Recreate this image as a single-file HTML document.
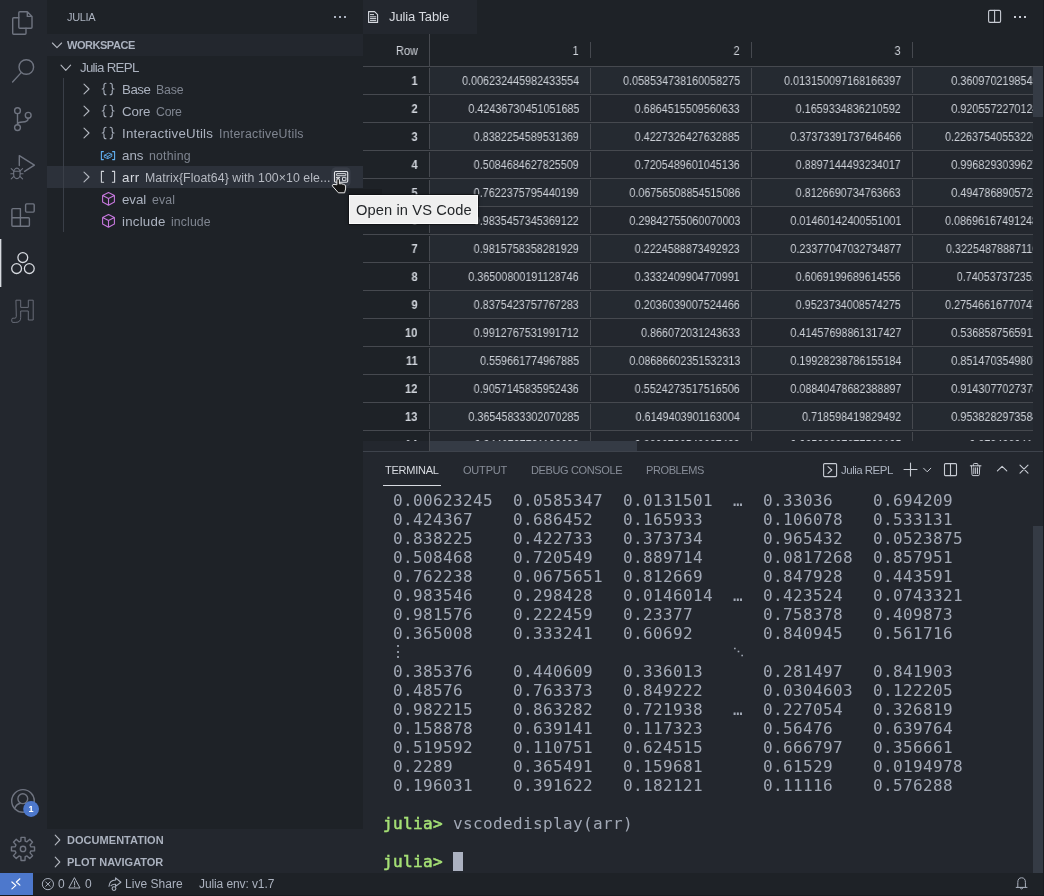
<!DOCTYPE html>
<html><head><meta charset="utf-8"><title>Julia Table</title>
<style>
*{box-sizing:border-box;margin:0;padding:0}
html,body{width:1044px;height:896px;overflow:hidden;background:#23272e}
body{font-family:"Liberation Sans",sans-serif;font-size:13px;color:#abb2bf;position:relative}
.abs{position:absolute}
#act{left:0;top:0;width:47px;height:873px;background:#23272e}
#side{left:47px;top:0;width:316px;height:873px;background:#1e2227}
#ed{left:363px;top:0;width:681px;height:452px;background:#1e2227;overflow:hidden}
#panel{left:363px;top:452px;width:681px;height:421px;background:#23272e;overflow:hidden}
#status{left:0;top:873px;width:1044px;height:23px;background:#1e2227}
svg{display:block;position:absolute;overflow:visible}
.t{position:absolute;white-space:pre;will-change:transform}
.hdr{left:47px;width:316px;height:22px;background:#23272e}
/* table */
#grid{left:0;width:670px;overflow:hidden;background:#23272e}
#ghead{left:0;top:0;width:681px;height:32px;background:#1e2227}
.r{position:absolute;left:0;width:670px;height:28px;border-bottom:1px solid #46494f}
.r.o{background:#252a31}.r.e{background:#23272e}
.c{position:absolute;top:0;height:27px;line-height:29px;font-size:12px;color:#cdd1d8;text-align:right;white-space:pre;overflow:visible}
.c span{display:inline-block;transform:scaleX(.9);transform-origin:100% 50%;will-change:transform}
.c:after{content:"";position:absolute;right:0;top:1px;bottom:1px;width:1px;background:#46494f}
.rn{left:0;width:67px;background:#1e2227;padding-right:12.7px;font-weight:700;color:#d0d4db}
.rn span{transform:scaleX(.93)}
.c1{left:67px;width:161px;padding-right:12px}
.c2{left:228px;width:161px;padding-right:12px}
.c3{left:389px;width:161px;padding-right:12px}
.c4{left:550px;width:161px;padding-right:12px}
.hc{position:absolute;top:0;height:32px;line-height:34px;font-size:12px;color:#d0d4db;text-align:right;padding-right:12px}
.hc span{display:inline-block;transform:scaleX(.92);transform-origin:100% 50%;will-change:transform}
.hs{position:absolute;top:8px;width:1px;height:16px;background:#46494f}
/* terminal */
#term{left:19.6px;top:39px;font-family:"DejaVu Sans Mono","Liberation Mono",monospace;font-size:16px;line-height:19px;letter-spacing:.368px;color:#a1a8b5;white-space:pre;will-change:transform}
#term b{color:#a5e075;font-weight:400;-webkit-text-stroke:.5px #a5e075}
.vd{position:relative;left:-3.2px;top:-1px;line-height:0}.dd{position:relative;left:-6px;top:-2.5px;font-size:11px;letter-spacing:0;line-height:0;font-weight:700}
</style></head><body>
<div id="act" class="abs"></div>
<div id="side" class="abs"></div>
<div class="abs hdr" style="top:34px"></div>
<div class="abs" style="left:47px;top:166px;width:316px;height:22px;background:#2c313a"></div>
<div class="abs" style="left:63px;top:78px;width:1px;height:154px;background:#3a3f48"></div>
<div class="abs hdr" style="top:829px;height:44px"></div>

<div id="ed" class="abs">
  <div class="abs" style="left:0;top:0;width:114px;height:34px;background:#23272e"></div>
  <div id="ghead" class="abs" style="top:34px">
    <div class="hc" style="left:0;width:67px"><span>Row</span></div>
    <div class="hc" style="left:67px;width:161px"><span>1</span></div>
    <div class="hc" style="left:228px;width:161px"><span>2</span></div>
    <div class="hc" style="left:389px;width:161px"><span>3</span></div>
    <div class="abs" style="left:66px;top:0;width:1px;height:32px;background:#46494f"></div>
    <div class="hs" style="left:227px"></div><div class="hs" style="left:388px"></div><div class="hs" style="left:549px"></div>
    <div class="abs" style="left:0;top:32px;width:681px;height:1px;background:#46494f"></div>
  </div>
  <div id="grid" class="abs" style="top:67px;height:374px">
<div class="r o" style="top:0px"><div class="c rn"><span>1</span></div><div class="c c1"><span>0.006232445982433554</span></div><div class="c c2"><span>0.058534738160058275</span></div><div class="c c3"><span>0.013150097168166397</span></div><div class="c c4"><span>0.36097021985455213</span></div></div>
<div class="r e" style="top:28px"><div class="c rn"><span>2</span></div><div class="c c1"><span>0.42436730451051685</span></div><div class="c c2"><span>0.6864515509560633</span></div><div class="c c3"><span>0.1659334836210592</span></div><div class="c c4"><span>0.92055722701245731</span></div></div>
<div class="r o" style="top:56px"><div class="c rn"><span>3</span></div><div class="c c1"><span>0.8382254589531369</span></div><div class="c c2"><span>0.4227326427632885</span></div><div class="c c3"><span>0.37373391737646466</span></div><div class="c c4"><span>0.226375405532264185</span></div></div>
<div class="r e" style="top:84px"><div class="c rn"><span>4</span></div><div class="c c1"><span>0.5084684627825509</span></div><div class="c c2"><span>0.7205489601045136</span></div><div class="c c3"><span>0.8897144493234017</span></div><div class="c c4"><span>0.99682930396275142</span></div></div>
<div class="r o" style="top:112px"><div class="c rn"><span>5</span></div><div class="c c1"><span>0.7622375795440199</span></div><div class="c c2"><span>0.06756508854515086</span></div><div class="c c3"><span>0.8126690734763663</span></div><div class="c c4"><span>0.49478689057241536</span></div></div>
<div class="r e" style="top:140px"><div class="c rn"><span>6</span></div><div class="c c1"><span>0.9835457345369122</span></div><div class="c c2"><span>0.29842755060070003</span></div><div class="c c3"><span>0.01460142400551001</span></div><div class="c c4"><span>0.086961674912481537</span></div></div>
<div class="r o" style="top:168px"><div class="c rn"><span>7</span></div><div class="c c1"><span>0.9815758358281929</span></div><div class="c c2"><span>0.2224588873492923</span></div><div class="c c3"><span>0.23377047032734877</span></div><div class="c c4"><span>0.322548788871160541</span></div></div>
<div class="r e" style="top:196px"><div class="c rn"><span>8</span></div><div class="c c1"><span>0.36500800191128746</span></div><div class="c c2"><span>0.3332409904770991</span></div><div class="c c3"><span>0.6069199689614556</span></div><div class="c c4"><span>0.7405373723518243</span></div></div>
<div class="r o" style="top:224px"><div class="c rn"><span>9</span></div><div class="c c1"><span>0.8375423757767283</span></div><div class="c c2"><span>0.2036039007524466</span></div><div class="c c3"><span>0.9523734008574275</span></div><div class="c c4"><span>0.275466167707477152</span></div></div>
<div class="r e" style="top:252px"><div class="c rn"><span>10</span></div><div class="c c1"><span>0.9912767531991712</span></div><div class="c c2"><span>0.866072031243633</span></div><div class="c c3"><span>0.41457698861317427</span></div><div class="c c4"><span>0.53685875659128431</span></div></div>
<div class="r o" style="top:280px"><div class="c rn"><span>11</span></div><div class="c c1"><span>0.559661774967885</span></div><div class="c c2"><span>0.08686602351532313</span></div><div class="c c3"><span>0.19928238786155184</span></div><div class="c c4"><span>0.85147035498072664</span></div></div>
<div class="r e" style="top:308px"><div class="c rn"><span>12</span></div><div class="c c1"><span>0.9057145835952436</span></div><div class="c c2"><span>0.5524273517516506</span></div><div class="c c3"><span>0.08840478682388897</span></div><div class="c c4"><span>0.91430770273782154</span></div></div>
<div class="r o" style="top:336px"><div class="c rn"><span>13</span></div><div class="c c1"><span>0.36545833302070285</span></div><div class="c c2"><span>0.6149403901163004</span></div><div class="c c3"><span>0.718598419829492</span></div><div class="c c4"><span>0.95382829735841627</span></div></div>
<div class="r e" style="top:364px"><div class="c rn"><span>14</span></div><div class="c c1"><span>0.3446737731106608</span></div><div class="c c2"><span>0.8806796540687499</span></div><div class="c c3"><span>0.06503397877569105</span></div><div class="c c4"><span>0.87940804195167</span></div></div>
  </div>
  <!-- v scrollbar -->
  <div class="abs" style="left:670px;top:67px;width:10px;height:374px;background:#23272e"></div>
  <div class="abs" style="left:670px;top:67px;width:10px;height:50px;background:#353b45"></div>
  <!-- h scrollbar -->
  <div class="abs" style="left:0;top:441px;width:681px;height:10px;background:#23272e"></div>
  <div class="abs" style="left:67px;top:441px;width:207px;height:10px;background:#353b45"></div>
  <div class="abs" style="left:66px;top:441px;width:1px;height:10px;background:#46494f"></div>
  <div class="abs" style="left:0;top:451px;width:681px;height:1px;background:#3e434c"></div>
</div>

<div id="panel" class="abs">
  <div class="abs" style="left:20px;top:33px;width:58px;height:1px;background:#d7dae0"></div>
  <div id="term" class="abs"> 0.00623245  0.0585347  0.0131501  …  0.33036    0.694209
 0.424367    0.686452   0.165933      0.106078   0.533131
 0.838225    0.422733   0.373734      0.965432   0.0523875
 0.508468    0.720549   0.889714      0.0817268  0.857951
 0.762238    0.0675651  0.812669      0.847928   0.443591
 0.983546    0.298428   0.0146014  …  0.423524   0.0743321
 0.981576    0.222459   0.23377       0.758378   0.409873
 0.365008    0.333241   0.60692       0.840945   0.561716
 <span class="vd">⋮</span>                                 <span class="dd">⋱</span>
 0.385376    0.440609   0.336013      0.281497   0.841903
 0.48576     0.763373   0.849222      0.0304603  0.122205
 0.982215    0.863282   0.721938   …  0.227054   0.326819
 0.158878    0.639141   0.117323      0.56476    0.639764
 0.519592    0.110751   0.624515      0.666797   0.356661
 0.2289      0.365491   0.159681      0.61529    0.0194978
 0.196031    0.391622   0.182121      0.11116    0.576288

<b>julia&gt;</b> vscodedisplay(arr)

<b>julia&gt;</b> </div>
  <div class="abs" style="left:90px;top:400px;width:10px;height:19px;background:#abb1c0"></div>
  <div class="abs" style="left:670px;top:74px;width:10px;height:347px;background:#353b45"></div>
</div>
<div id="status" class="abs">
  <div class="abs" style="left:0;top:0;width:33px;height:22px;background:#4d78cc"></div>
</div>
<div class="abs" style="left:1043px;top:0;width:1px;height:896px;background:#181a1f"></div>
<div class="abs" style="left:0;top:895px;width:1044px;height:1px;background:#181a1f"></div>
<div class="t" style="left:67.06px;top:10px;font-size:11px;line-height:14px;color:#abb2bf;letter-spacing:-0.368px;">JULIA</div>
<div class="t" style="left:66.66px;top:38px;font-size:11px;line-height:14px;color:#abb2bf;font-weight:700;letter-spacing:-0.460px;">WORKSPACE</div>
<div class="t" style="left:79.72px;top:59px;font-size:13.3px;line-height:17px;color:#abb2bf;letter-spacing:-0.722px;">Julia REPL</div>
<div class="t" style="left:122.07px;top:81px;font-size:13.3px;line-height:17px;color:#abb2bf;letter-spacing:-0.487px;">Base</div>
<div class="t" style="left:156.01px;top:82px;font-size:12.3px;line-height:16px;color:#7f8590;letter-spacing:-0.112px;">Base</div>
<div class="t" style="left:122.07px;top:103px;font-size:13.3px;line-height:17px;color:#abb2bf;letter-spacing:-0.116px;">Core</div>
<div class="t" style="left:156.01px;top:104px;font-size:12.3px;line-height:16px;color:#7f8590;letter-spacing:-0.231px;">Core</div>
<div class="t" style="left:122.07px;top:125px;font-size:13.3px;line-height:17px;color:#abb2bf;letter-spacing:0.251px;">InteractiveUtils</div>
<div class="t" style="left:218.81px;top:126px;font-size:12.3px;line-height:16px;color:#7f8590;letter-spacing:0.259px;">InteractiveUtils</div>
<div class="t" style="left:121.72px;top:147px;font-size:13.3px;line-height:17px;color:#abb2bf;letter-spacing:0.037px;">ans</div>
<div class="t" style="left:149.26px;top:148px;font-size:12.3px;line-height:16px;color:#7f8590;letter-spacing:0.213px;">nothing</div>
<div class="t" style="left:121.72px;top:169px;font-size:13.3px;line-height:17px;color:#d7dae0;letter-spacing:0.516px;">arr</div>
<div class="t" style="left:145.11px;top:170px;font-size:12.3px;line-height:16px;color:#b6bac2;letter-spacing:0.077px;">Matrix{Float64} with 100×10 ele...</div>
<div class="t" style="left:121.87px;top:191px;font-size:13.3px;line-height:17px;color:#abb2bf;letter-spacing:-0.036px;">eval</div>
<div class="t" style="left:152.01px;top:192px;font-size:12.3px;line-height:16px;color:#7f8590;letter-spacing:0.168px;">eval</div>
<div class="t" style="left:121.87px;top:213px;font-size:13.3px;line-height:17px;color:#abb2bf;letter-spacing:0.218px;">include</div>
<div class="t" style="left:170.76px;top:214px;font-size:12.3px;line-height:16px;color:#7f8590;letter-spacing:0.109px;">include</div>
<div class="t" style="left:67.16px;top:833px;font-size:11px;line-height:14px;color:#abb2bf;font-weight:700;letter-spacing:0.041px;">DOCUMENTATION</div>
<div class="t" style="left:67.16px;top:855px;font-size:11px;line-height:14px;color:#abb2bf;font-weight:700;letter-spacing:-0.027px;">PLOT NAVIGATOR</div>
<div class="t" style="left:389.48px;top:8px;font-size:13px;line-height:17px;color:#d7dae0;letter-spacing:-0.106px;">Julia Table</div>
<div class="t" style="left:384.96px;top:463px;font-size:11px;line-height:14px;color:#d7dae0;letter-spacing:-0.256px;">TERMINAL</div>
<div class="t" style="left:463.06px;top:463px;font-size:11px;line-height:14px;color:#878d98;letter-spacing:-0.192px;">OUTPUT</div>
<div class="t" style="left:531.16px;top:463px;font-size:11px;line-height:14px;color:#878d98;letter-spacing:-0.368px;">DEBUG CONSOLE</div>
<div class="t" style="left:646.16px;top:463px;font-size:11px;line-height:14px;color:#878d98;letter-spacing:-0.389px;">PROBLEMS</div>
<div class="t" style="left:841.04px;top:463px;font-size:11.5px;line-height:14px;color:#abb2bf;letter-spacing:-0.507px;">Julia REPL</div>
<div class="t" style="left:57.92px;top:876px;font-size:12px;line-height:16px;color:#abb2bf;letter-spacing:-0.127px;">0</div>
<div class="t" style="left:85.02px;top:876px;font-size:12px;line-height:16px;color:#abb2bf;letter-spacing:0.072px;">0</div>
<div class="t" style="left:125.02px;top:876px;font-size:12px;line-height:16px;color:#abb2bf;letter-spacing:0.028px;">Live Share</div>
<div class="t" style="left:198.62px;top:876px;font-size:12px;line-height:16px;color:#abb2bf;letter-spacing:-0.097px;">Julia env: v1.7</div>
<svg width="1044" height="896" viewBox="0 0 1044 896" style="left:0;top:0">
<path d="M19.8,11.7 H27.3 L32,16.4 V27.3 Q32,28.3 31,28.3 H19.8 Q18.8,28.3 18.8,27.3 V12.7 Q18.8,11.7 19.8,11.7 Z M27.3,11.7 V16.4 H32" fill="none" stroke="#6f7480" stroke-width="1.4" stroke-linecap="round" stroke-linejoin="round" />
<path d="M18.8,17.7 H13.7 Q12.7,17.7 12.7,18.7 V33.2 Q12.7,34.2 13.7,34.2 H25 Q26,34.2 26,33.2 V28.3" fill="none" stroke="#6f7480" stroke-width="1.4" stroke-linecap="round" stroke-linejoin="round" />
<circle cx="26.3" cy="67" r="7.3" fill="none" stroke="#6f7480" stroke-width="1.4"/>
<path d="M21.2,72.6 L12.6,82" fill="none" stroke="#6f7480" stroke-width="1.4" stroke-linecap="round" stroke-linejoin="round" />
<circle cx="17.5" cy="110.7" r="2.9" fill="none" stroke="#6f7480" stroke-width="1.4"/>
<circle cx="28.2" cy="115.3" r="2.9" fill="none" stroke="#6f7480" stroke-width="1.4"/>
<circle cx="17.5" cy="127.6" r="2.9" fill="none" stroke="#6f7480" stroke-width="1.4"/>
<path d="M17.5,113.7 V124.6 M28.2,118.3 C28.2,121.6 25.5,122 22.5,122 C19.5,122 17.5,122.8 17.5,124.6" fill="none" stroke="#6f7480" stroke-width="1.4" stroke-linecap="round" stroke-linejoin="round" />
<path d="M19.3,165.6 V155.6 L34.4,165.2 L24.6,171.4" fill="none" stroke="#6f7480" stroke-width="1.4" stroke-linecap="round" stroke-linejoin="round" />
<ellipse cx="16.9" cy="173.4" rx="3.3" ry="5.2" fill="none" stroke="#6f7480" stroke-width="1.2"/>
<path d="M13.8,171.2 H20 M13.4,170.6 L11.2,168.6 M20.4,170.6 L22.6,168.6 M13.4,173.8 H10.8 M20.4,173.8 H23 M13.6,176.6 L11.2,178.8 M20.2,176.6 L22.6,178.8" fill="none" stroke="#6f7480" stroke-width="1.1" stroke-linecap="round" stroke-linejoin="round" />
<path d="M12.9,208.6 H20.4 V217.7 H28.4 Q29.4,217.7 29.4,218.7 V225.2 Q29.4,226.2 28.4,226.2 H12.9 Q11.9,226.2 11.9,225.2 V209.6 Q11.9,208.6 12.9,208.6 Z M20.4,217.7 V226.2 M11.9,217.7 H20.4" fill="none" stroke="#6f7480" stroke-width="1.4" stroke-linecap="round" stroke-linejoin="round" />
<rect x="25.6" y="203.9" width="8.6" height="8.2" rx="1" fill="none" stroke="#6f7480" stroke-width="1.4"/>
<circle cx="22.8" cy="257.6" r="4.9" fill="none" stroke="#d7dae0" stroke-width="1.3"/>
<circle cx="16.6" cy="268.6" r="4.9" fill="none" stroke="#d7dae0" stroke-width="1.3"/>
<circle cx="29.3" cy="268.6" r="4.9" fill="none" stroke="#d7dae0" stroke-width="1.3"/>
<path d="M16.3,300.2 H20.7 V307.4 H28.3 V300.2 H33.2 V320 H28.3 V311 H20.7 V317.5 Q20.7,322.4 15.8,322.4 H13 Q11.8,322.4 11.8,321.2 V319.3 Q11.8,318.2 13,318.2 H14.8 Q16.3,318.2 16.3,316.7 Z" fill="none" stroke="#6f7480" stroke-width="0.9" stroke-linecap="round" stroke-linejoin="round" />
<circle cx="23" cy="800.9" r="11.3" fill="none" stroke="#6f7480" stroke-width="1.4"/>
<circle cx="22.8" cy="798.7" r="4.9" fill="none" stroke="#6f7480" stroke-width="1.4"/>
<path d="M14.6,808.6 C15.6,805.6 18,803.8 20.3,803.2 M25.3,803.2 C27.6,803.8 30,805.6 31.2,808.4" fill="none" stroke="#6f7480" stroke-width="1.4" stroke-linecap="round" stroke-linejoin="round" />
<circle cx="31.1" cy="809" r="7.9" fill="#4d78cc"/>
<text x="31.1" y="812.2" font-family="Liberation Sans,sans-serif" font-size="9" font-weight="700" fill="#fff" text-anchor="middle">1</text>
<path d="M21.02,837.37 L24.98,837.37 L25.16,841.09 L26.99,841.85 L29.75,839.35 L32.55,842.15 L30.05,844.91 L30.81,846.74 L34.53,846.92 L34.53,850.88 L30.81,851.06 L30.05,852.89 L32.55,855.65 L29.75,858.45 L26.99,855.95 L25.16,856.71 L24.98,860.43 L21.02,860.43 L20.84,856.71 L19.01,855.95 L16.25,858.45 L13.45,855.65 L15.95,852.89 L15.19,851.06 L11.47,850.88 L11.47,846.92 L15.19,846.74 L15.95,844.91 L13.45,842.15 L16.25,839.35 L19.01,841.85 L20.84,841.09 Z" fill="none" stroke="#6f7480" stroke-width="1.4" stroke-linecap="round" stroke-linejoin="round" />
<circle cx="23" cy="848.9" r="2.7" fill="none" stroke="#6f7480" stroke-width="1.4"/>
<rect x="0" y="239" width="1" height="48" fill="#d7dae0"/><rect x="1" y="239" width="1" height="48" fill="#d7dae0" opacity=".35"/>
<rect x="334" y="16" width="2" height="2" fill="#abb2bf"/>
<rect x="339" y="16" width="2" height="2" fill="#abb2bf"/>
<rect x="344" y="16" width="2" height="2" fill="#abb2bf"/>
<path d="M52.4,43 L57,47.6 L61.6,43" fill="none" stroke="#b4b8c0" stroke-width="1.1" stroke-linecap="round" stroke-linejoin="round" />
<path d="M61,65.2 L65.8,70.4 L70.6,65.2" fill="none" stroke="#b4b8c0" stroke-width="1.1" stroke-linecap="round" stroke-linejoin="round" />
<path d="M84,84.2 L89,89 L84,93.8" fill="none" stroke="#b4b8c0" stroke-width="1.1" stroke-linecap="round" stroke-linejoin="round" />
<path d="M84,106.2 L89,111 L84,115.8" fill="none" stroke="#b4b8c0" stroke-width="1.1" stroke-linecap="round" stroke-linejoin="round" />
<path d="M84,128.2 L89,133 L84,137.8" fill="none" stroke="#b4b8c0" stroke-width="1.1" stroke-linecap="round" stroke-linejoin="round" />
<path d="M84,172.2 L89,177 L84,181.8" fill="none" stroke="#b4b8c0" stroke-width="1.1" stroke-linecap="round" stroke-linejoin="round" />
<path d="M55.2,835.2 L59.8,840 L55.2,844.8" fill="none" stroke="#b4b8c0" stroke-width="1.1" stroke-linecap="round" stroke-linejoin="round" />
<path d="M55.2,857.2 L59.8,862 L55.2,866.8" fill="none" stroke="#b4b8c0" stroke-width="1.1" stroke-linecap="round" stroke-linejoin="round" />
<path d="M106,83.2 Q104,83.2 104,85.2 V87.2 Q104,89 102.2,89 Q104,89 104,90.8 V92.8 Q104,94.8 106,94.8" fill="none" stroke="#abb2bf" stroke-width="1.1" stroke-linecap="round" stroke-linejoin="round" />
<path d="M110.2,83.2 Q112.2,83.2 112.2,85.2 V87.2 Q112.2,89 114,89 Q112.2,89 112.2,90.8 V92.8 Q112.2,94.8 110.2,94.8" fill="none" stroke="#abb2bf" stroke-width="1.1" stroke-linecap="round" stroke-linejoin="round" />
<path d="M106,105.2 Q104,105.2 104,107.2 V109.2 Q104,111 102.2,111 Q104,111 104,112.8 V114.8 Q104,116.8 106,116.8" fill="none" stroke="#abb2bf" stroke-width="1.1" stroke-linecap="round" stroke-linejoin="round" />
<path d="M110.2,105.2 Q112.2,105.2 112.2,107.2 V109.2 Q112.2,111 114,111 Q112.2,111 112.2,112.8 V114.8 Q112.2,116.8 110.2,116.8" fill="none" stroke="#abb2bf" stroke-width="1.1" stroke-linecap="round" stroke-linejoin="round" />
<path d="M106,127.2 Q104,127.2 104,129.2 V131.2 Q104,133 102.2,133 Q104,133 104,134.8 V136.8 Q104,138.8 106,138.8" fill="none" stroke="#abb2bf" stroke-width="1.1" stroke-linecap="round" stroke-linejoin="round" />
<path d="M110.2,127.2 Q112.2,127.2 112.2,129.2 V131.2 Q112.2,133 114,133 Q112.2,133 112.2,134.8 V136.8 Q112.2,138.8 110.2,138.8" fill="none" stroke="#abb2bf" stroke-width="1.1" stroke-linecap="round" stroke-linejoin="round" />
<path d="M103.4,151.6 H101.4 V159.6 H103.4 M112.6,151.6 H114.6 V159.6 H112.6" fill="none" stroke="#61afef" stroke-width="1.1" stroke-linecap="round" stroke-linejoin="round" />
<path d="M104.6,155.2 L108.6,153 L111.8,154.2 V156.4 L107.8,158.6 L104.6,157.4 Z M104.6,155.2 L107.8,156.4 L111.8,154.2 M107.8,156.4 V158.6" fill="none" stroke="#61afef" stroke-width="0.9" stroke-linecap="round" stroke-linejoin="round" />
<path d="M103.6,171.4 H101.4 V182.2 H103.6 M112.4,171.4 H114.6 V182.2 H112.4" fill="none" stroke="#d0d3d9" stroke-width="1.1" stroke-linecap="round" stroke-linejoin="round" />
<path d="M108.5,192.5 L114.4,195.5 V202.10000000000002 L108.5,205.20000000000002 L102.6,202.10000000000002 V195.5 Z M102.6,195.5 L108.5,198.60000000000002 L114.4,195.5 M108.5,198.60000000000002 V205.20000000000002" fill="none" stroke="#c678dd" stroke-width="1.1" stroke-linecap="round" stroke-linejoin="round" />
<path d="M108.5,214.5 L114.4,217.5 V224.10000000000002 L108.5,227.20000000000002 L102.6,224.10000000000002 V217.5 Z M102.6,217.5 L108.5,220.60000000000002 L114.4,217.5 M108.5,220.60000000000002 V227.20000000000002" fill="none" stroke="#c678dd" stroke-width="1.1" stroke-linecap="round" stroke-linejoin="round" />
<rect x="331.4" y="167.2" width="19.2" height="19.4" rx="4.5" fill="#383d47"/>
<rect x="334.5" y="171.5" width="13.2" height="10.8" rx="1.2" fill="none" stroke="#e4e6ea" stroke-width="1.1"/>
<rect x="336.6" y="173.6" width="9.2" height="2.1" rx="0.4" fill="none" stroke="#e4e6ea" stroke-width="0.9"/>
<rect x="342.5" y="177.4" width="3.4" height="3.2" rx="0.2" fill="none" stroke="#e4e6ea" stroke-width="0.9"/>
<path d="M336.4,177.4 H340 L338.2,178.8 Z" fill="#e4e6ea" stroke="#e4e6ea" stroke-width="0.8" stroke-linecap="round" stroke-linejoin="round" />
<path d="M336.9,184.4 V180 Q336.9,178.7 338.1,178.7 Q339.4,178.7 339.4,180 V183.9 L341.3,183.7 L343.4,184.3 L345.6,185.4 V189 L344.6,192.8 H338.4 L332.3,185.9 Q332.1,184.5 333.6,184.4 Z" fill="#151515" stroke="#e8e8e8" stroke-width="1.0" stroke-linecap="round" stroke-linejoin="round" />
<path d="M368.6,11.6 H374.6 L377.6,14.6 V22.4 H368.6 Z" fill="none" stroke="#d7dae0" stroke-width="1.1" stroke-linecap="round" stroke-linejoin="round" />
<path d="M370.4,14.6 H373.6 M370.4,16.8 H375.8 M370.4,18.6 H375.8 M370.4,20.4 H375.8" fill="none" stroke="#d7dae0" stroke-width="1.0" stroke-linecap="round" stroke-linejoin="round" />
<rect x="988.6" y="10.4" width="12" height="12" rx="1.3" fill="none" stroke="#c8ccd4" stroke-width="1.1"/>
<path d="M994.6,10.4 V22.4" fill="none" stroke="#c8ccd4" stroke-width="1.1" stroke-linecap="round" stroke-linejoin="round" />
<rect x="1014" y="16" width="2" height="2" fill="#c8ccd4"/>
<rect x="1019" y="16" width="2" height="2" fill="#c8ccd4"/>
<rect x="1024" y="16" width="2" height="2" fill="#c8ccd4"/>
<rect x="823.6" y="463.6" width="13" height="13" rx="1" fill="none" stroke="#c8ccd4" stroke-width="1.1"/>
<path d="M828,466.6 L831.8,470 L828,473.4" fill="none" stroke="#c8ccd4" stroke-width="1.1" stroke-linecap="round" stroke-linejoin="round" />
<path d="M904,469.5 H917 M910.5,463 V476" fill="none" stroke="#c8ccd4" stroke-width="1.1" stroke-linecap="round" stroke-linejoin="round" />
<path d="M923.6,468.2 L927.2,471.8 L930.8,468.2" fill="none" stroke="#c8ccd4" stroke-width="1.0" stroke-linecap="round" stroke-linejoin="round" />
<rect x="944.5" y="463.6" width="12" height="12" rx="1" fill="none" stroke="#c8ccd4" stroke-width="1.1"/>
<path d="M950.5,463.6 V475.6" fill="none" stroke="#c8ccd4" stroke-width="1.1" stroke-linecap="round" stroke-linejoin="round" />
<path d="M970.3,465.8 H981 M973.4,465.8 V464.4 Q973.4,463.5 974.3,463.5 H977 Q977.9,463.5 977.9,464.4 V465.8 M971.5,465.8 L972,474.6 Q972,475.6 973,475.6 H978.3 Q979.3,475.6 979.3,474.6 L979.8,465.8 M973.8,467.8 V473.6 M975.65,467.8 V473.6 M977.5,467.8 V473.6" fill="none" stroke="#c8ccd4" stroke-width="1.0" stroke-linecap="round" stroke-linejoin="round" />
<path d="M997.4,470.9 L1002.1,466.3 L1006.8,470.9" fill="none" stroke="#c8ccd4" stroke-width="1.1" stroke-linecap="round" stroke-linejoin="round" />
<path d="M1020,465.1 L1028,473.1 M1028,465.1 L1020,473.1" fill="none" stroke="#c8ccd4" stroke-width="1.1" stroke-linecap="round" stroke-linejoin="round" />
<path d="M11.9,882 L15.8,885.4 L11.9,888.9 M19.9,878.8 L16.4,882 L19.9,885.1" fill="none" stroke="#ffffff" stroke-width="1.2" stroke-linecap="round" stroke-linejoin="round" />
<circle cx="47.9" cy="884.1" r="5.6" fill="none" stroke="#abb2bf" stroke-width="1.0"/>
<path d="M45.7,881.9 L50.1,886.3 M50.1,881.9 L45.7,886.3" fill="none" stroke="#abb2bf" stroke-width="1.0" stroke-linecap="round" stroke-linejoin="round" />
<path d="M74.6,878 L80,888 H69.2 Z M74.6,881.6 V885 M74.6,886.2 V886.6" fill="none" stroke="#abb2bf" stroke-width="1.0" stroke-linecap="round" stroke-linejoin="round" />
<path d="M115.6,880 V877.9 L120.9,882.2 L115.6,886.4 V884.2 C113.2,884.1 111.8,884.6 111,885.6 M115.6,880 C111.4,880.2 109.3,882.6 109,886.2" fill="none" stroke="#abb2bf" stroke-width="1.1" stroke-linecap="round" stroke-linejoin="round" />
<circle cx="114" cy="888.6" r="1.9" fill="none" stroke="#abb2bf" stroke-width="1.1"/>
<path d="M1017.8,887.2 V882.4 Q1017.8,877.8 1021.6,877.8 Q1025.4,877.8 1025.4,882.4 V887.2 M1016.2,887.4 H1027 M1020.2,888 Q1021.6,890.2 1023,888" fill="none" stroke="#abb2bf" stroke-width="1.0" stroke-linecap="round" stroke-linejoin="round" />
</svg>
<!-- tooltip -->
<div class="abs" style="left:349px;top:189px;width:33px;height:6px;background:rgba(0,0,0,.13)"></div>
<div class="abs" style="left:349px;top:195px;width:129px;height:29px;background:#efefef;border:1px solid #fbfbfb;box-shadow:0 0 0 1px rgba(14,15,18,.7),0 0 4px rgba(0,0,0,.35)"></div>
<div class="t" style="left:355.91px;top:201px;font-size:14.67px;line-height:18px;color:#232629;letter-spacing:0.106px;">Open in VS Code</div>
</body></html>
